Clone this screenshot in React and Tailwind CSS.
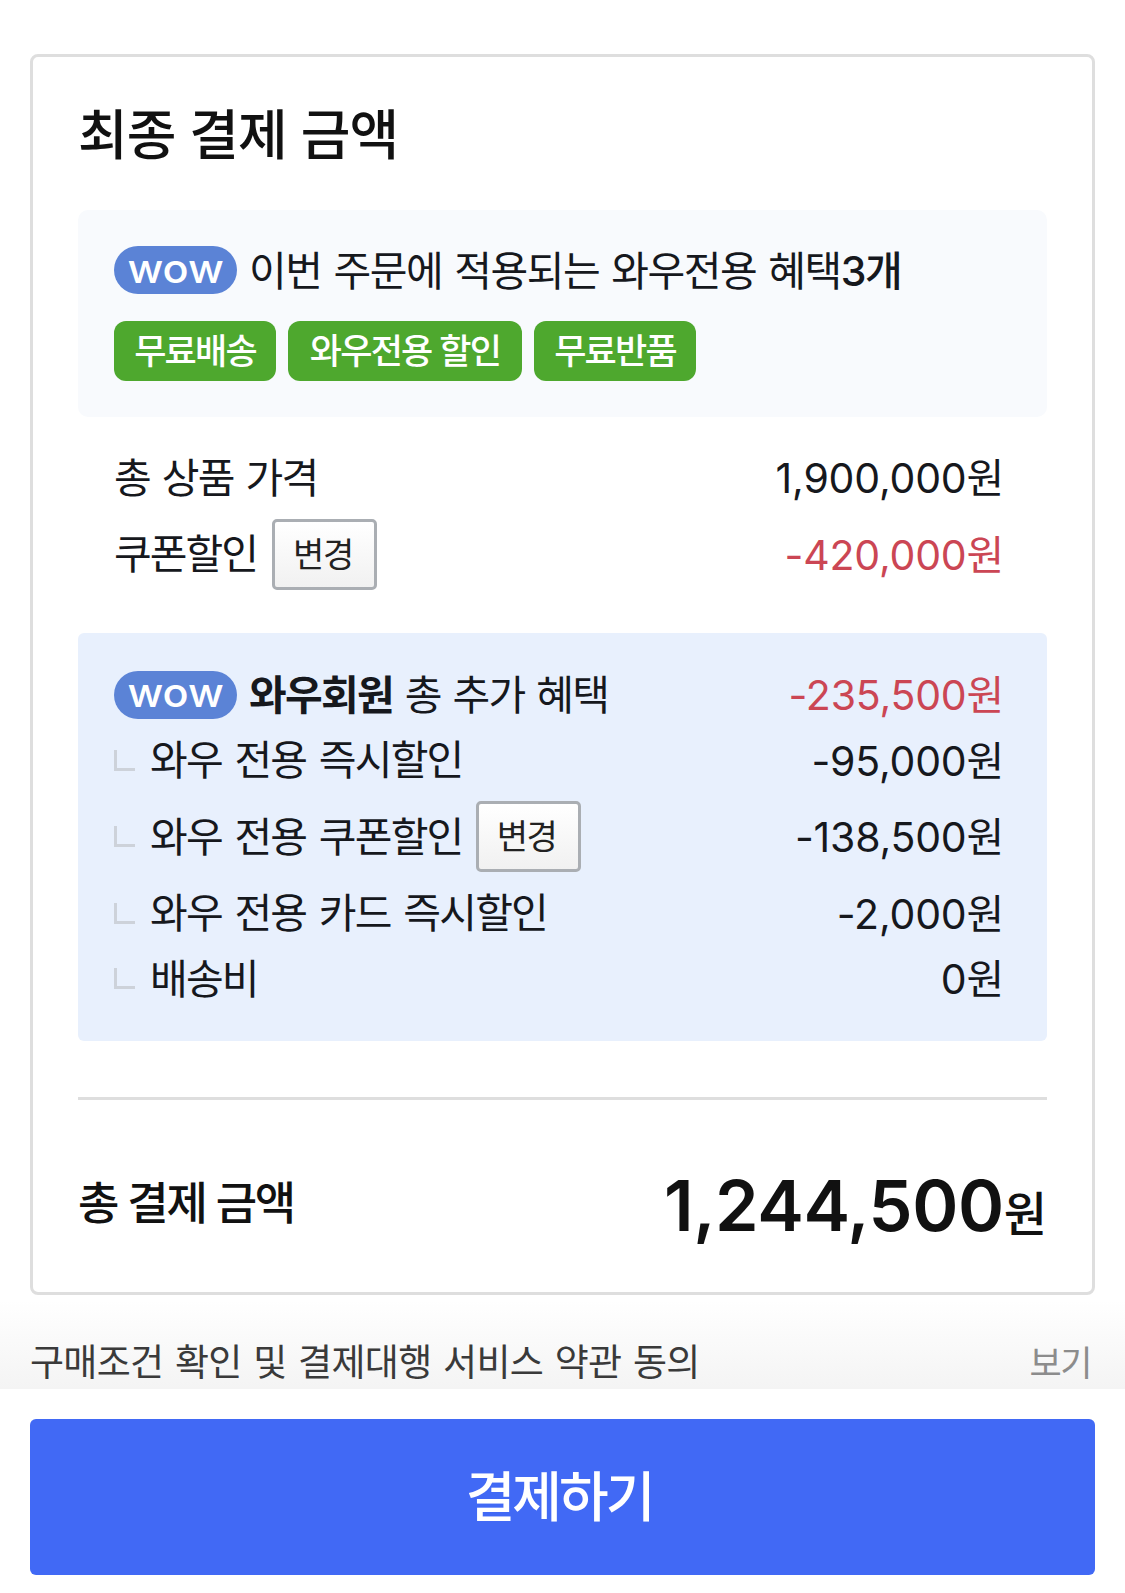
const font = { fontFamily: '"Liberation Sans", "Noto Sans CJK KR", sans-serif' };

const WowBadge = () => (
  <span className="flex h-[48px] w-[123px] shrink-0 items-center justify-center rounded-full bg-[#5b83d6] pb-[3px] text-[40px] font-medium tracking-normal text-white [font-family:Inter,sans-serif] [word-spacing:0]">
    <span className="scale-x-[1.08]">wow</span>
  </span>
);

const ChangeButton = ({ className }) => (
  <span className={`flex h-[71px] w-[105px] items-center justify-center rounded-[5px] border-[3px] border-[#aaaeb3] bg-[linear-gradient(#ffffff,#f1f1f1)] pr-[3px] pt-[2px] text-[34px] tracking-[-1.5px] text-[#222] ${className}`}>
    변경
  </span>
);

const Corner = () => (
  <span className="mr-[15px] h-[21px] w-[21px] shrink-0 border-b-[3px] border-l-[3px] border-[#cdd2da]" />
);

// Inter has the digits, hangul falls through to Noto
const Price = ({ children, red }) => (
  <span className={`pt-[3px] tracking-[-0.2px] [font-family:Inter,'Noto_Sans_CJK_KR',sans-serif] ${red ? "text-[#cb4654]" : ""}`}>
    {children}
  </span>
);

const SubRow = ({ label, value, button, height }) => (
  <div className={`flex items-center justify-between ${height}`}>
    <div className="flex items-center">
      <Corner />
      <span className="pt-[4px] tracking-[-1.8px] [word-spacing:3px]">{label}</span>
      {button && <ChangeButton className="ml-[13px]" />}
    </div>
    <Price>{value}</Price>
  </div>
);

export default function App() {
  return (
    <div style={font} className="h-[1593px] w-[1125px] overflow-hidden bg-white text-[#16181d]">
      <div className="px-[30px] pt-[54px]">
        {/* Card */}
        <div className="h-[1241px] rounded-[8px] border-[3px] border-[#dedede] px-[45px]">
          <h1 className="flex h-[153px] items-center pt-[5px] text-[54px] font-medium tracking-[-1px] text-[#111]">
            최종 결제 금액
          </h1>

          {/* Wow benefits */}
          <div className="h-[207px] rounded-[10px] bg-[#f8fafd] px-[36px] pt-[27px]">
            <div className="flex items-center text-[41px] tracking-[-1.45px] [word-spacing:2px]">
              <WowBadge />
              <span className="ml-[12px] pt-[4px]">
                이번 주문에 적용되는 와우전용 혜택<b className="font-medium [font-family:Inter,'Noto_Sans_CJK_KR',sans-serif]">3개</b>
              </span>
            </div>
            <div className="mt-[17px] flex gap-[12px] text-[35px] font-medium tracking-[-1.8px] text-white">
              <span className="flex h-[60px] w-[162px] items-center justify-center rounded-[12px] bg-[#4ea82e] pt-[4px]">무료배송</span>
              <span className="flex h-[60px] w-[234px] items-center justify-center rounded-[12px] bg-[#4ea82e] pt-[4px]">와우전용 할인</span>
              <span className="flex h-[60px] w-[162px] items-center justify-center rounded-[12px] bg-[#4ea82e] pt-[4px]">무료반품</span>
            </div>
          </div>

          {/* Price rows */}
          <div className="pl-[36px] pr-[43px] pt-[23px] text-[41px]">
            <div className="flex h-[74px] items-center justify-between">
              <span className="pt-[6px] tracking-[-1.7px] [word-spacing:2px]">총 상품 가격</span>
              <Price>1,900,000원</Price>
            </div>
            <div className="flex h-[80px] items-center justify-between">
              <div className="flex items-center">
                <span className="pt-[4px] tracking-[-2px]">쿠폰할인</span>
                <ChangeButton className="ml-[15px]" />
              </div>
              <Price red>-420,000원</Price>
            </div>
          </div>

          {/* Wow total */}
          <div className="mt-[39px] h-[408px] rounded-[6px] bg-[#e8f0fd] pl-[36px] pr-[43px] pt-[28px] text-[41px]">
            <div className="flex h-[67px] items-center justify-between">
              <div className="flex items-center tracking-[-1.7px]">
                <WowBadge />
                <span className="ml-[12px] pt-[4px] [word-spacing:2px]">
                  <b className="font-bold">와우회원</b> 총 추가 혜택
                </span>
              </div>
              <Price red>-235,500원</Price>
            </div>
            <SubRow label="와우 전용 즉시할인" value="-95,000원" height="h-[64px]" />
            <SubRow label="와우 전용 쿠폰할인" value="-138,500원" button height="h-[89px]" />
            <SubRow label="와우 전용 카드 즉시할인" value="-2,000원" height="h-[64px]" />
            <SubRow label="배송비" value="0원" height="h-[67px]" />
          </div>

          <div className="mt-[56px] h-[3px] bg-[#dedede]" />

          {/* Total */}
          <div className="flex h-[208px] items-center justify-between pt-[2px] text-[#111]">
            <span className="text-[45px] font-medium tracking-[-2.3px]">총 결제 금액</span>
            <span className="flex items-baseline">
              <span className="text-[70px] font-semibold tracking-[-0.4px] [font-family:Inter,sans-serif]">1,244,500</span>
              <span className="text-[47px] font-medium">원</span>
            </span>
          </div>
        </div>
      </div>

      {/* Agreement */}
      <div className="mt-[5px] flex h-[89px] items-end justify-between bg-[linear-gradient(#ffffff,#f4f4f4)] pl-[30px] pr-[34px] text-[37px] leading-[51px]">
        <span className="tracking-[-0.7px] text-[#3a3a3a] [word-spacing:2px]">구매조건 확인 및 결제대행 서비스 약관 동의</span>
        <span className="text-[35px] tracking-[-1.5px] text-[#8c8c8c]">보기</span>
      </div>

      {/* Pay button */}
      <div className="px-[30px] pt-[30px]">
        <div className="flex h-[156px] items-center justify-center rounded-[6px] bg-[#4169f5] pr-[7px] pt-[2px] text-[54px] font-medium tracking-[-3px] text-white">
          결제하기
        </div>
      </div>
    </div>
  );
}
